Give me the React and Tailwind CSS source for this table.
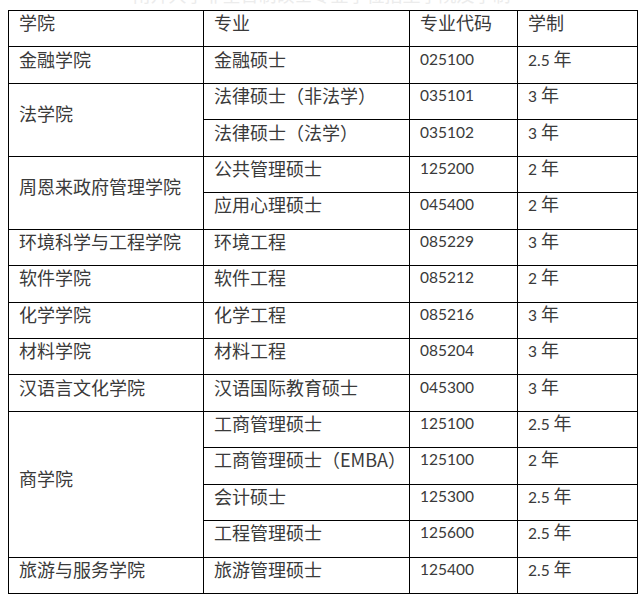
const rows = [
  { school: '金融学院', span: 1, items: [['金融硕士', '025100', '2.5 年']] },
  {
    school: '法学院',
    span: 2,
    items: [
      ['法律硕士（非法学）', '035101', '3 年'],
      ['法律硕士（法学）', '035102', '3 年'],
    ],
  },
  {
    school: '周恩来政府管理学院',
    span: 2,
    items: [
      ['公共管理硕士', '125200', '2 年'],
      ['应用心理硕士', '045400', '2 年'],
    ],
  },
  { school: '环境科学与工程学院', span: 1, items: [['环境工程', '085229', '3 年']] },
  { school: '软件学院', span: 1, items: [['软件工程', '085212', '2 年']] },
  { school: '化学学院', span: 1, items: [['化学工程', '085216', '3 年']] },
  { school: '材料学院', span: 1, items: [['材料工程', '085204', '3 年']] },
  { school: '汉语言文化学院', span: 1, items: [['汉语国际教育硕士', '045300', '3 年']] },
  {
    school: '商学院',
    span: 4,
    items: [
      ['工商管理硕士', '125100', '2.5 年'],
      ['工商管理硕士（EMBA）', '125100', '2 年'],
      ['会计硕士', '125300', '2.5 年'],
      ['工程管理硕士', '125600', '2.5 年'],
    ],
  },
  { school: '旅游与服务学院', span: 1, items: [['旅游管理硕士', '125400', '2.5 年']] },
]

const cjk = "font-['Noto_Sans_CJK_SC',sans-serif]"
const num = "font-['Lato','Noto_Sans_CJK_SC',sans-serif]"
const cell = 'border border-black align-middle pl-[10px] pr-1 pt-0 pb-[13px] leading-[20px] whitespace-nowrap'

export default function App() {
  return (
    <div className="w-[643px] h-[600px] bg-white overflow-hidden">
      {/* clipped title line from the page above */}
      <div className="h-[10px] overflow-hidden flex justify-center">
        <div className={`-mt-[15px] leading-[18px] text-[18px] text-[#ececec] ${cjk}`}>
          南开大学非全日制硕士专业学位招生学院及学制
        </div>
      </div>

      <table className="ml-[8px] border-collapse table-fixed w-[629px] text-[#3a3a3a]">
        <colgroup>
          <col className="w-[195px]" />
          <col className="w-[206px]" />
          <col className="w-[108px]" />
          <col className="w-[120px]" />
        </colgroup>
        <tbody>
          <tr className="h-[36.44px]">
            <td className={`${cell} ${cjk} text-[18px]`}>学院</td>
            <td className={`${cell} ${cjk} text-[18px]`}>专业</td>
            <td className={`${cell} pl-[9px] ${cjk} text-[18px]`}>专业代码</td>
            <td className={`${cell} ${cjk} text-[18px]`}>学制</td>
          </tr>
          {rows.map((r) =>
            r.items.map((it, i) => (
              <tr key={r.school + i} className="h-[36.44px]">
                {i === 0 && (
                  <td rowSpan={r.span} className={`${cell} ${cjk} text-[18px]`}>
                    {r.school}
                  </td>
                )}
                <td className={`${cell} ${cjk} text-[18px]`}>{it[0]}</td>
                <td className={`${cell} pl-[9px] ${num} text-[15.5px]`}>{it[1]}</td>
                <td className={`${cell} ${num} text-[15.5px]`}>
                  {it[2].split(' ')[0]} <span className={`${cjk} text-[18px]`}>{it[2].split(' ')[1]}</span>
                </td>
              </tr>
            ))
          )}
        </tbody>
      </table>
    </div>
  )
}
